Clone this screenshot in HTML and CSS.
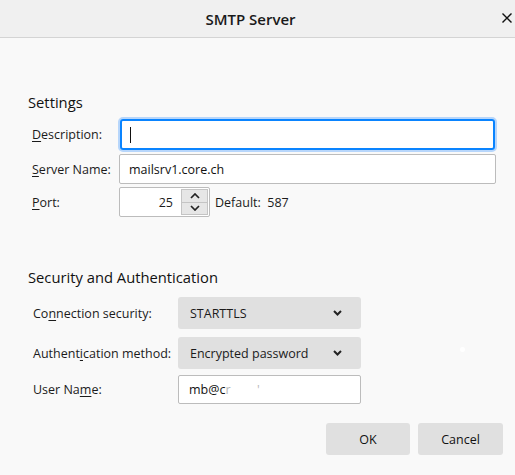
FILE: index.html
```html
<!DOCTYPE html>
<html>
<head>
<meta charset="utf-8">
<link rel="stylesheet" href="styles.css">
</head>
<body>
<div class="dialog">
  <div class="titlebar">
    <span class="title">SMTP Server</span>
    <span class="close"><svg width="10" height="10" viewBox="0 0 10 10"><path d="M0.5 0.5 L9.5 9.5 M9.5 0.5 L0.5 9.5" stroke="#111" stroke-width="1.4" fill="none"/></svg></span>
  </div>
  <div class="content">
    <section class="settings">
      <h2 class="heading">Settings</h2>
      <div class="row r-desc">
        <label class="lbl w1"><u>D</u>escription:</label>
        <div class="focus-ring"><div class="field focused"><span class="caret"></span></div></div>
      </div>
      <div class="row r-server">
        <label class="lbl w1"><u>S</u>erver Name:</label>
        <div class="field grow">mailsrv1.core.ch</div>
      </div>
      <div class="row r-port">
        <label class="lbl w1"><u>P</u>ort:</label>
        <div class="port">
          <span class="portval">25</span>
          <span class="spin">
            <span class="spinbtn"><svg width="10" height="6" viewBox="0 0 10 6"><path d="M1 5 L5 1 L9 5" stroke="#222" stroke-width="1.7" fill="none"/></svg></span>
            <span class="spinbtn"><svg width="10" height="6" viewBox="0 0 10 6"><path d="M1 1 L5 5 L9 1" stroke="#222" stroke-width="1.7" fill="none"/></svg></span>
          </span>
        </div>
        <span class="default">Default:&nbsp; 587</span>
      </div>
    </section>
    <section class="security">
      <h2 class="heading">Security and Authentication</h2>
      <div class="row r-conn">
        <label class="lbl w2">Co<u>n</u>nection security:</label>
        <div class="select"><span>STARTTLS</span><svg width="9" height="6" viewBox="0 0 9 6"><path d="M1 1 L4.5 4.5 L8 1" stroke="#222" stroke-width="2" fill="none"/></svg></div>
      </div>
      <div class="row r-auth">
        <label class="lbl w2">Authent<u>i</u>cation method:</label>
        <div class="select"><span>Encrypted password</span><svg width="9" height="6" viewBox="0 0 9 6"><path d="M1 1 L4.5 4.5 L8 1" stroke="#222" stroke-width="2" fill="none"/></svg></div>
      </div>
      <div class="row r-user">
        <label class="lbl w2">User Na<u>m</u>e:</label>
        <div class="field user">mb@c<span class="blur">r&nbsp;&nbsp;&nbsp;&nbsp;&nbsp;&nbsp;'</span></div>
      </div>
    </section>
    <div class="buttons">
      <button class="btn ok">OK</button>
      <button class="btn cancel">Cancel</button>
    </div>
    <span class="dot"></span>
  </div>
</div>
</body>
</html>
```
FILE: styles.css
```css
* { box-sizing: border-box; }
html, body { margin: 0; padding: 0; }
body {
  width: 515px;
  height: 475px;
  background: #f9f9f9;
  font-family: "Open Sans", "Noto Sans", sans-serif;
  font-size: 12.5px;
  color: #1b1b1b;
  overflow: hidden;
}
.dialog { width: 515px; height: 475px; display: flex; flex-direction: column; }
.titlebar {
  height: 38px;
  flex: none;
  background: #f0f0f0;
  border-bottom: 1px solid #d4d4d4;
  display: flex;
  align-items: center;
  justify-content: center;
  position: relative;
}
.title { font-size: 15px; font-weight: 600; color: #1a1a1a; margin-left: -14px; }
.close { position: absolute; right: 3px; top: 13px; width: 10px; height: 10px; display: flex; }
.content { position: relative; flex: 1; padding: 54px 18px 0 28px; display: flex; flex-direction: column; }
.heading { margin: 0; font-size: 14.75px; font-weight: 400; line-height: 20px; color: #111; }
.settings .heading { margin-bottom: 5px; }
.row { display: flex; align-items: center; }
.settings .row { padding-left: 4px; }
.r-server { margin-top: 2px; }
.r-port { margin-top: 3px; }
.lbl { white-space: nowrap; }
.w1 { width: 86px; flex: none; }
.w2 { width: 145px; flex: none; }
.lbl u { text-decoration-thickness: 1px; text-underline-offset: 2px; }
.field {
  height: 30px;
  background: #fff;
  border: 1px solid #bcbcbc;
  border-radius: 2px;
  padding: 0 9px;
  display: flex;
  align-items: center;
  color: #111;
}
.grow { flex: 1; margin-left: 1px; margin-right: 1px; }
.focus-ring {
  flex: 1;
  position: relative;
  height: 35px;
  border: 2px solid #b7d6fb;
  border-radius: 5px;
}
.field.focused {
  height: 31px;
  border: 2px solid #0a84ff;
  border-radius: 3px;
}
.caret { position: absolute; left: 10px; top: 8px; width: 1px; height: 16px; background: #111; }
.port {
  width: 91px;
  height: 30px;
  margin-left: 1px;
  background: #fff;
  border: 1px solid #bcbcbc;
  border-radius: 2px;
  display: flex;
  align-items: center;
  justify-content: flex-end;
  padding: 1px;
}
.portval { margin-right: 8px; }
.spin { width: 27px; height: 26px; display: flex; flex-direction: column; border: 1px solid #c4c4c4; }
.spinbtn { flex: 1; background: #e6e6e6; display: flex; align-items: center; justify-content: center; }
.spinbtn + .spinbtn { border-top: 1px solid #c4c4c4; }
.default { margin-left: 5px; }
.security { margin-top: 50px; }
.security .heading { margin-bottom: 10px; }
.security .row { padding-left: 5px; }
.r-auth { margin-top: 8px; }
.r-user { margin-top: 6px; }
.select {
  width: 183px;
  height: 32px;
  background: #e0e0e0;
  border-radius: 3px;
  display: flex;
  align-items: center;
  justify-content: space-between;
  padding: 0 19px 0 12px;
}
.user { width: 183px; height: 29px; padding: 0 10px; }
.blur { color: #b8b8b8; letter-spacing: 1px; }
.buttons { display: flex; justify-content: flex-end; gap: 8px; margin-top: 19px; margin-right: -6px; }
.btn {
  height: 32px;
  background: #e0e0e0;
  border: none;
  border-radius: 3px;
  font-family: inherit;
  font-size: 12.5px;
  color: #111;
}
.ok { width: 84px; }
.cancel { width: 85px; }
.dot { position: absolute; left: 460px; top: 309px; width: 5px; height: 5px; border-radius: 50%; background: #fff; }
```
